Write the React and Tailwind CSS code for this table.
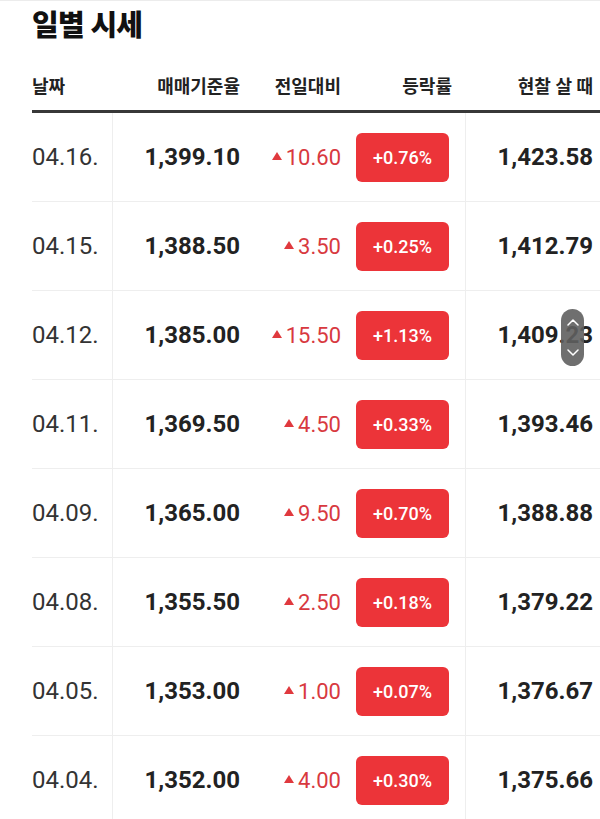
import React from 'react';

const rows = [
    { date: '04.16.', base: '1,399.10', diff: '10.60', rate: '+0.76%', cash: '1,423.58' },
    { date: '04.15.', base: '1,388.50', diff: '3.50', rate: '+0.25%', cash: '1,412.79' },
    { date: '04.12.', base: '1,385.00', diff: '15.50', rate: '+1.13%', cash: '1,409.23' },
    { date: '04.11.', base: '1,369.50', diff: '4.50', rate: '+0.33%', cash: '1,393.46' },
    { date: '04.09.', base: '1,365.00', diff: '9.50', rate: '+0.70%', cash: '1,388.88' },
    { date: '04.08.', base: '1,355.50', diff: '2.50', rate: '+0.18%', cash: '1,379.22' },
    { date: '04.05.', base: '1,353.00', diff: '1.00', rate: '+0.07%', cash: '1,376.67' },
    { date: '04.04.', base: '1,352.00', diff: '4.00', rate: '+0.30%', cash: '1,375.66' },
];

const cols = 'grid grid-cols-[81px_139px_101px_113px_134px]';

const UpTriangle = () => (
    <svg width="10" height="8" viewBox="0 0 10 8" className="mr-[4px] mb-[3px]">
        <polygon points="5,0 10,8 0,8" fill="#e0393e" />
    </svg>
);

const ScrollHandle = () => (
    <div className="absolute left-[561px] top-[308px] w-[23px] h-[57px] rounded-full bg-[#5f5f5f]/90 flex flex-col items-center justify-between py-[10px]">
        <svg width="12" height="7" viewBox="0 0 12 7">
            <polyline points="1,6 6,1 11,6" fill="none" stroke="#fff" strokeWidth="1.5" strokeLinecap="round" strokeLinejoin="round" />
        </svg>
        <svg width="12" height="7" viewBox="0 0 12 7">
            <polyline points="1,1 6,6 11,1" fill="none" stroke="#fff" strokeWidth="1.5" strokeLinecap="round" strokeLinejoin="round" />
        </svg>
    </div>
);

const App = () => {
    return (
        <div className="relative w-[600px] h-[819px] overflow-hidden bg-white border-t border-[#ececec] font-[Roboto,'Noto_Sans_CJK_KR',sans-serif]">
            <div className="pl-8">
                <h1 className="h-[52px] flex items-center text-[29px] font-black text-[#111] tracking-tight">일별 시세</h1>

                <div className={`${cols} h-[60px] pt-[10px] items-center border-b-[3px] border-[#383838] text-[18px] font-bold text-[#222]`}>
                    <div>날짜</div>
                    <div className="text-right pr-3">매매기준율</div>
                    <div className="text-right pr-3">전일대비</div>
                    <div className="text-right pr-[14px]">등락률</div>
                    <div className="text-right pr-[7px] whitespace-nowrap">현찰 살 때</div>
                </div>

                {rows.map((r) => (
                    <div key={r.date} className={`${cols} h-[89px] border-b border-[#eeeeee]`}>
                        <div className="flex items-center text-[24px] text-[#333] border-r border-[#eeeeee]">{r.date}</div>
                        <div className="flex items-center justify-end pr-3 text-[24px] font-bold text-[#222]">{r.base}</div>
                        <div className="flex items-center justify-end pr-3 text-[22px] text-[#d8393f]">
                            <UpTriangle />
                            {r.diff}
                        </div>
                        <div className="flex items-center justify-end pr-4 border-r border-[#eeeeee]">
                            <div className="w-[93px] h-[49px] rounded-[6px] bg-[#ec3439] flex items-center justify-center text-white text-[18px] font-medium">
                                {r.rate}
                            </div>
                        </div>
                        <div className="flex items-center justify-end pr-[7px] text-[24px] font-bold text-[#222]">{r.cash}</div>
                    </div>
                ))}
            </div>
            <ScrollHandle />
        </div>
    );
};

export default App;
